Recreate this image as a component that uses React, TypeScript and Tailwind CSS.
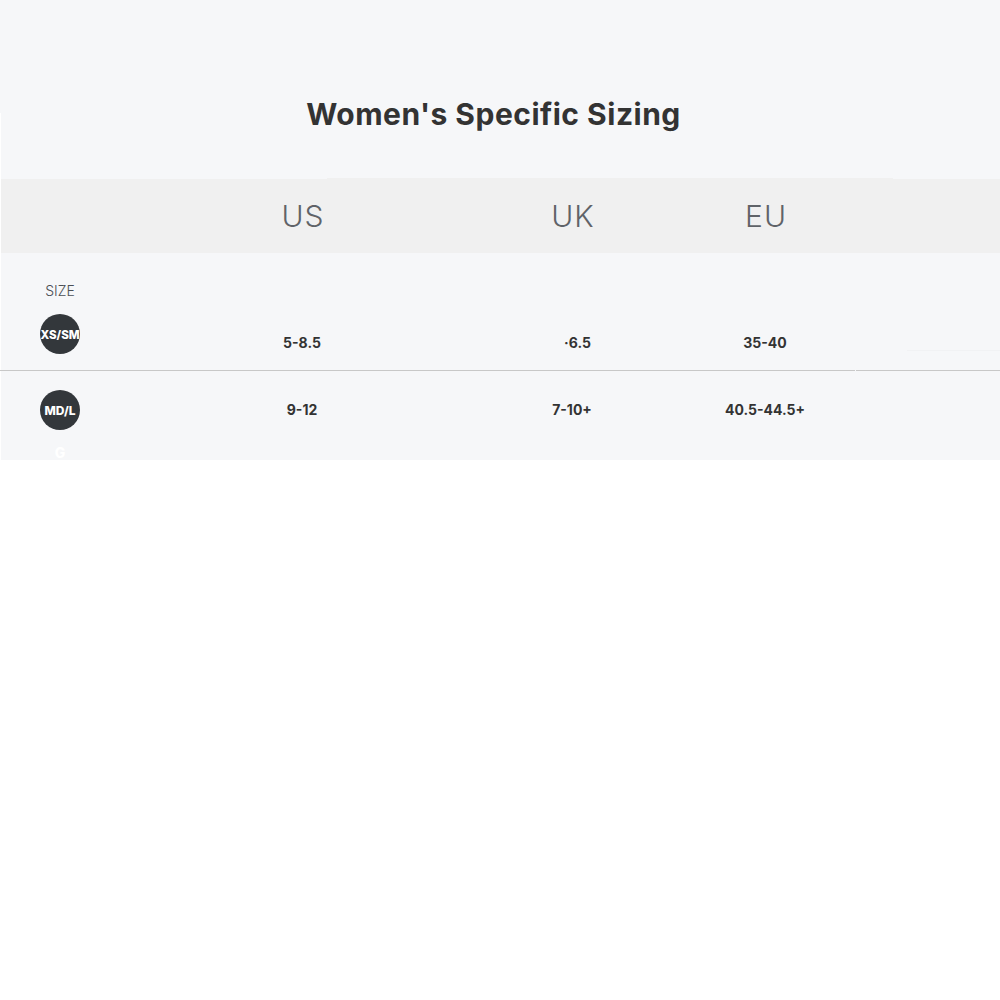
export default function App() {
  const font = { fontFamily: '"Inter", "Liberation Sans", sans-serif' };
  return (
    <div className="w-[1000px] h-[1000px] bg-white overflow-hidden" style={font}>
      <div className="h-[113px] bg-[#f6f7f9]">
        <h1 className="pt-[95px] pr-[13px] text-center text-[30px] leading-[38px] font-bold text-[#333333] tracking-[0.5px]">Women's Specific Sizing</h1>
      </div>
      <div className="h-[347px] overflow-hidden">
        <div className="ml-[1px] h-[347px] bg-[#f6f7f9]">
          <div className="h-[66px]" />
          <div className="relative h-[74px] pl-px bg-[#f0f0f0] grid grid-cols-[119px_364px_176px_210px_130px] items-center text-center text-[30px] font-light text-[#5f6368] tracking-[1px]">
            <div className="absolute -top-px left-[326px] w-[566px] h-px bg-[#f0f0f0]" />
            <div />
            <div>US</div>
            <div>UK</div>
            <div>EU</div>
            <div />
          </div>
          <div className="relative -ml-[1px] h-[118px] border-b border-[#c8c8c8] grid grid-cols-[120px_364px_176px_210px_130px] text-center text-[14px] leading-[20px] font-bold text-[#333333]">
            <div className="absolute left-[907px] right-0 top-[97px] h-px bg-[#f1f2f4]" />
            <div className="absolute left-[855px] w-px -bottom-px h-px bg-[#f6f7f9]" />
            <div className="pt-[30px] flex flex-col items-center">
              <div className="h-[16px] leading-[16px] text-[14px] font-light text-[#4a4f55] mb-[15px]">SIZE</div>
              <div className="w-10 h-10 pt-px rounded-full bg-[#33373b] flex items-center justify-center text-[11.5px] font-extrabold text-white whitespace-nowrap">XS/SM</div>
            </div>
            <div className="pt-[80px]">5-8.5</div>
            <div className="pt-[80px] pl-[11px]">·6.5</div>
            <div className="pt-[80px]">35-40</div>
            <div />
          </div>
          <div className="-ml-[1px] grid grid-cols-[120px_364px_176px_210px_130px] text-center text-[14px] leading-[20px] font-bold text-[#333333]">
            <div className="pt-[19px] flex flex-col items-center">
              <div className="w-10 h-10 pt-px rounded-full bg-[#33373b] flex items-center justify-center text-[12px] font-extrabold text-white">MD/L</div>
              <div className="mt-[15px] text-[14px] leading-[16px] font-extrabold text-white">G</div>
            </div>
            <div className="pt-[29px]">9-12</div>
            <div className="pt-[29px]">7-10+</div>
            <div className="pt-[29px]">40.5-44.5+</div>
            <div />
          </div>
        </div>
      </div>
    </div>
  );
}
